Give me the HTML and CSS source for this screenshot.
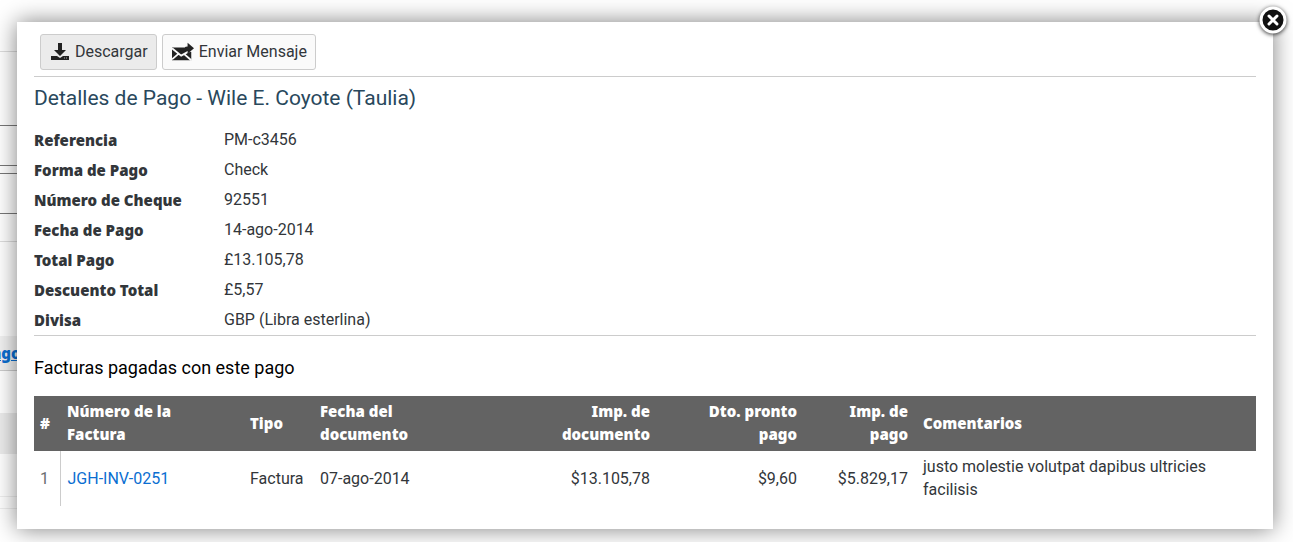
FILE: index.html
```
<!DOCTYPE html>
<html lang="es">
<head>
  <meta charset="UTF-8">
  <meta name="viewport" content="width=device-width, initial-scale=1.0">
  <title>Detalles de Pago</title>
  <link rel="stylesheet" href="styles.css">
</head>
<body>
  <!-- page behind the dialog -->
  <div class="backdrop">
    <div class="bg-header"></div>
    <div class="bg-title"></div>
    <div class="bg-field"></div>
    <div class="bg-field"></div>
    <div class="bg-space"></div>
    <div class="bg-filter"></div>
    <div class="bg-tab"><a href="#">ago</a></div>
    <div class="bg-gap"></div>
    <div class="bg-band"></div>
    <div class="bg-gap"></div>
    <div class="bg-row"></div>
  </div>

  <div class="dialog" role="dialog" aria-labelledby="title">
    <button type="button" class="close" aria-label="Cerrar">
      <svg viewBox="0 0 30 30" width="30" height="30">
        <circle cx="15" cy="15" r="12" fill="#111" stroke="#fff" stroke-width="3"/>
        <path d="M11 11l8 8M19 11l-8 8" stroke="#fff" stroke-width="3" stroke-linecap="round"/>
      </svg>
    </button>

    <div class="toolbar">
      <button type="button" class="btn active">
        <svg viewBox="0 0 20 20" width="20" height="20" fill="#222">
          <path d="M8 1h4v7h4l-6 6-6-6h4z"/>
          <path d="M1 14h6l3 2 3-2h6v4H1z"/>
          <path d="M14 16h1M16 16h1" stroke="#aaa"/>
        </svg>
        Descargar
      </button>
      <button type="button" class="btn">
        <svg viewBox="0 0 24 20" width="22" height="20" fill="#222">
          <path d="M0 5h13l8 5v9H0z"/>
          <path d="M0 6l10 8 11-6M0 18l7-6M21 19l-8-7" fill="none" stroke="#fafafa" stroke-width="2"/>
          <path d="M12 10c0-4 2-6 5-6V0l7 6-7 6V8c-2 0-4 0-5 2z"/>
        </svg>
        Enviar Mensaje
      </button>
    </div>

    <h1 id="title">Detalles de Pago - Wile E. Coyote (Taulia)</h1>

    <dl class="details">
      <dt>Referencia</dt><dd>PM-c3456</dd>
      <dt>Forma de Pago</dt><dd>Check</dd>
      <dt>Número de Cheque</dt><dd>92551</dd>
      <dt>Fecha de Pago</dt><dd>14-ago-2014</dd>
      <dt>Total Pago</dt><dd>£13.105,78</dd>
      <dt>Descuento Total</dt><dd>£5,57</dd>
      <dt>Divisa</dt><dd>GBP (Libra esterlina)</dd>
    </dl>

    <h2>Facturas pagadas con este pago</h2>

    <table class="invoices">
      <thead>
        <tr>
          <th class="col-num">#</th>
          <th class="col-invoice">Número de la<br>Factura</th>
          <th class="col-type">Tipo</th>
          <th class="col-date">Fecha del<br>documento</th>
          <th class="col-amount right">Imp. de<br>documento</th>
          <th class="col-discount right">Dto. pronto<br>pago</th>
          <th class="col-paid right">Imp. de<br>pago</th>
          <th>Comentarios</th>
        </tr>
      </thead>
      <tbody>
        <tr>
          <td class="num">1</td>
          <td><a href="#">JGH-INV-0251</a></td>
          <td>Factura</td>
          <td>07-ago-2014</td>
          <td class="right">$13.105,78</td>
          <td class="right">$9,60</td>
          <td class="right">$5.829,17</td>
          <td>justo molestie volutpat dapibus ultricies facilisis</td>
        </tr>
      </tbody>
    </table>
  </div>
</body>
</html>
```
FILE: styles.css
```
* {
    box-sizing: border-box;
}

body {
    margin: 0;
    font-family: Roboto, Arial, sans-serif;
    font-size: 16px;
    color: #32363a;
    background-color: #fff;
}

a {
    color: #0a6ed1;
    text-decoration: none;
}

/* page behind the dialog */
.backdrop {
    height: 100vh;
    margin-right: 40px;
    overflow: hidden;
}

.bg-header {
    height: 52px;
    border-bottom: 1px solid #ddd;
}

.bg-title {
    height: 73px;
}

.bg-field {
    height: 41px;
    margin-bottom: 7px;
    border-top: 1px solid #777;
    border-bottom: 1px solid #777;
}

.bg-space {
    height: 21px;
    border-bottom: 1px solid #ddd;
}

.bg-filter {
    height: 94px;
}

.bg-tab {
    height: 35px;
    line-height: 35px;
    background-color: #f2f2f2;
    border-bottom: 1px solid #ccc;
    text-indent: -8px;
    font-weight: 900;
}

.bg-tab a {
    text-decoration: underline;
}

.bg-gap {
    height: 42px;
}

.bg-band {
    height: 41px;
    background-color: #ececec;
}

.bg-row {
    height: 13px;
    border-top: 1px solid #eee;
    border-bottom: 1px solid #eee;
}

/* dialog */
.dialog {
    position: absolute;
    top: 22px;
    left: 17px;
    right: 20px;
    padding: 12px 17px 23px;
    background-color: #fff;
    box-shadow: 0 0 22px rgba(0, 0, 0, 0.5);
}

.close {
    position: absolute;
    top: -17px;
    right: -15px;
    padding: 0;
    border: none;
    background: none;
    cursor: pointer;
}

.close svg {
    display: block;
    filter: drop-shadow(0 1px 2px rgba(0, 0, 0, 0.8));
}

.toolbar {
    display: flex;
    gap: 5px;
    padding: 0 6px 6px;
    border-bottom: 1px solid #ccc;
}

.btn {
    display: flex;
    align-items: center;
    gap: 5px;
    height: 36px;
    padding: 0 8px 1px 9px;
    font-family: inherit;
    font-size: 16px;
    color: #32363a;
    background-color: #fafafa;
    border: 1px solid #ccc;
    border-radius: 3px;
    cursor: pointer;
}

.btn.active {
    background-color: #ebebeb;
}

h1 {
    margin: 6px 0 12px;
    font-size: 21px;
    font-weight: 400;
    line-height: 30px;
    color: #29485c;
}

.details {
    display: grid;
    grid-template-columns: 190px 1fr;
    margin: 0;
    line-height: 30px;
    border-bottom: 1px solid #ccc;
}

.details dt,
.invoices th,
.bg-tab {
    font-family: "Noto Sans", Roboto, sans-serif;
    font-size: 15px;
    font-weight: 900;
}

.details dd {
    margin: 0;
}

h2 {
    margin: 20px 0 16px;
    font-size: 18px;
    font-weight: 400;
    line-height: 24px;
    color: #000;
}

.invoices {
    width: 100%;
    table-layout: fixed;
    border-collapse: collapse;
    line-height: 23px;
}

.invoices th,
.invoices td {
    padding: 4px 8px 5px 7px;
    text-align: left;
    vertical-align: middle;
}

.invoices th {
    color: #fff;
    background-color: #636363;
}

.invoices .right {
    text-align: right;
}

.invoices .col-num,
.invoices .num {
    padding: 0 6px;
}

.invoices .num {
    color: #6a6d70;
    border-right: 1px solid #ccc;
}

.col-num {
    width: 26px;
}

.col-invoice {
    width: 183px;
}

.col-type {
    width: 70px;
}

.col-date {
    width: 115px;
}

.col-amount {
    width: 230px;
}

.col-discount {
    width: 147px;
}

.col-paid {
    width: 111px;
}
```
